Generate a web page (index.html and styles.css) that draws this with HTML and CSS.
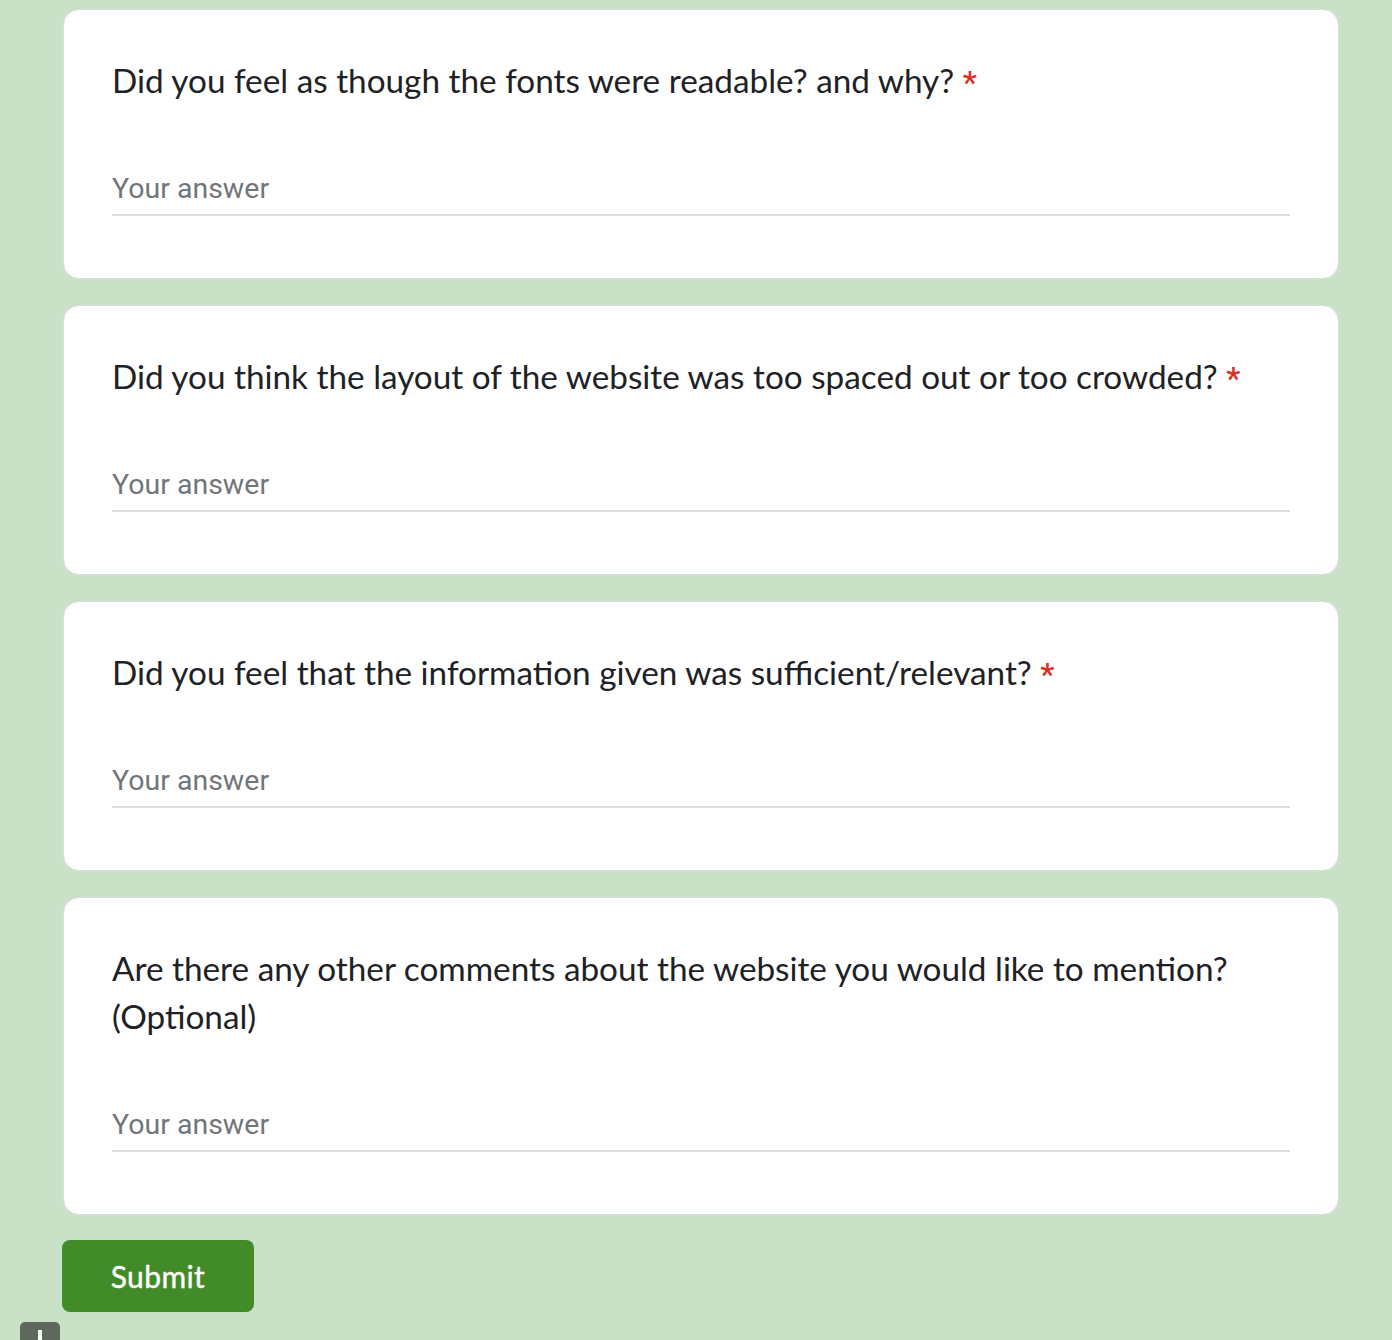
FILE: index.html
```html
<!DOCTYPE html>
<html lang="en">
<head>
<meta charset="utf-8">
<title>Feedback form</title>
<link rel="stylesheet" href="styles.css">
</head>
<body>
<main class="form">
  <section class="card">
    <div class="title">Did you feel as though the fonts were readable? and why? <span class="req">*</span></div>
    <div class="answer">Your answer</div>
  </section>
  <section class="card">
    <div class="title">Did you think the layout of the website was too spaced out or too crowded? <span class="req">*</span></div>
    <div class="answer">Your answer</div>
  </section>
  <section class="card">
    <div class="title">Did you feel that the information given was sufficient/relevant? <span class="req">*</span></div>
    <div class="answer">Your answer</div>
  </section>
  <section class="card">
    <div class="title">Are there any other comments about the website you would like to mention? (Optional)</div>
    <div class="answer">Your answer</div>
  </section>
  <div class="actions">
    <button class="submit" type="button">Submit</button>
  </div>
</main>
<div class="report"><span class="report-bar"></span></div>
</body>
</html>
```
FILE: styles.css
```css
html, body {
  margin: 0;
  padding: 0;
  background: #c9e2c7;
}
body {
  padding-top: 9px;
}
.form {
  margin-left: 63px;
  width: 1276px;
  display: flex;
  flex-direction: column;
  gap: 26px;
}
.card {
  background: #ffffff;
  border: 1px solid #dadce0;
  border-radius: 16px;
  padding: 46px 48px 62px 48px;
  display: flex;
  flex-direction: column;
}
.title {
  font-family: Lato, "Open Sans", sans-serif;
  font-size: 33.3px;
  line-height: 48px;
  color: #202124;
}
.req {
  font-family: Roboto, "Liberation Sans", sans-serif;
  font-size: 32px;
  font-weight: 500;
  line-height: 1;
  color: #d93025;
}
.answer {
  margin-top: 68px;
  font-family: Roboto, "Liberation Sans", sans-serif;
  font-size: 28.5px;
  line-height: 34px;
  color: #70757a;
  padding-bottom: 8px;
  border-bottom: 2px solid #dadce0;
}
.actions {
  display: flex;
  margin-left: -1px;
  margin-top: -1px;
}
.submit {
  width: 192px;
  height: 72px;
  border: none;
  border-radius: 8px;
  background: #418b29;
  color: #ffffff;
  font-family: Lato, "Open Sans", sans-serif;
  font-size: 30px;
  font-weight: 400;
  -webkit-text-stroke: 0.4px #ffffff;
  letter-spacing: 0.4px;
  padding: 0;
  cursor: pointer;
}
.report {
  margin-left: 20px;
  margin-top: 10px;
  width: 40px;
  height: 18px;
  background: #5e685c;
  border-radius: 5px 5px 0 0;
  display: flex;
  justify-content: center;
  padding-top: 8px;
  box-sizing: border-box;
}
.report-bar {
  width: 4px;
  height: 10px;
  background: #ffffff;
}
```
